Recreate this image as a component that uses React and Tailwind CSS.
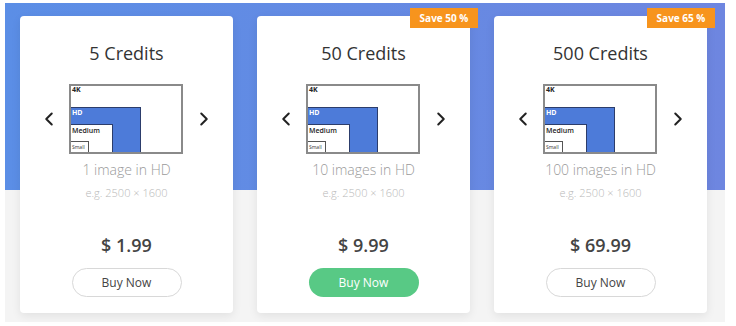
import { ChevronLeft, ChevronRight } from 'lucide-react'

const plans = [
  { credits: '5 Credits', images: '1 image in HD', price: '$ 1.99' },
  { credits: '50 Credits', images: '10 images in HD', price: '$ 9.99', save: 'Save 50 %', featured: true },
  { credits: '500 Credits', images: '100 images in HD', price: '$ 69.99', save: 'Save 65 %' },
]

function SizeDiagram() {
  return (
    <div className="relative h-[70px] w-[114px] border-2 border-[#8a8a8a] bg-white">
      <span className="absolute left-[1px] top-[0px] text-[7px] font-bold leading-[8px] text-[#222]">4K</span>
      <div className="absolute bottom-0 left-0 h-[45px] w-[70px] border-r border-t border-[#2c3d6b] bg-[#4d7bd9]">
        <span className="absolute left-[1px] top-[1px] text-[7px] font-bold leading-[8px] text-white">HD</span>
      </div>
      <div className="absolute bottom-0 left-0 h-[28px] w-[42px] border-r border-t border-[#2c3d6b] bg-white">
        <span className="absolute left-[1px] top-[2px] text-[7px] font-semibold leading-[8px] text-[#222]">Medium</span>
      </div>
      <div className="absolute bottom-0 left-0 flex h-[11px] w-[18px] items-center border-r border-t border-[#555] bg-white">
        <span className="pl-[1px] text-[5px] leading-[6px] text-[#333]">Small</span>
      </div>
    </div>
  )
}

function PlanCard({ plan }) {
  return (
    <div className="relative flex h-[297px] w-[213px] flex-col items-center rounded-[4px] bg-white pt-[25px] shadow-[0_3px_10px_rgba(0,0,0,0.08)]">
      {plan.save ? (
        <div className="absolute -right-2 -top-2 flex h-[20px] w-[68px] items-center justify-center bg-[#f7941d] text-[10px] font-bold text-white">
          {plan.save}
        </div>
      ) : null}
      <h3 className="text-[18px] leading-[24px] text-[#333]">{plan.credits}</h3>
      <div className="mt-[19px] flex w-full items-center gap-[9px] pl-[18px]">
        <ChevronLeft size={22} strokeWidth={2.2} className="text-[#222]" />
        <SizeDiagram />
        <ChevronRight size={22} strokeWidth={2.2} className="ml-[1px] text-[#222]" />
      </div>
      <p className="mt-[6px] text-[14px] font-light leading-[20px] text-[#9a9a9a]">{plan.images}</p>
      <p className="mt-[5px] text-[11px] font-light leading-[16px] text-[#b8b8b8]">e.g. 2500 × 1600</p>
      <p className="mt-[32px] text-[18px] font-semibold leading-[24px] text-[#444]">{plan.price}</p>
      <button
        className={
          plan.featured
            ? 'mt-[11px] h-[29px] w-[110px] rounded-full bg-[#58c985] text-[12px] font-medium text-white'
            : 'mt-[11px] h-[29px] w-[110px] rounded-full border border-[#d8d8d8] bg-white text-[12px] text-[#444]'
        }
      >
        Buy Now
      </button>
    </div>
  )
}

export default function App() {
  return (
    <div className="h-[326px] w-[736px] bg-white pl-[5px] pt-[3px]" style={{ fontFamily: '"Open Sans", "Noto Sans", sans-serif' }}>
      <div className="flex h-[319px] w-[720px] gap-[24px] pl-[15px] pt-[13px] bg-[linear-gradient(180deg,transparent_187px,#f4f4f4_187px),linear-gradient(90deg,#5b8ee6,#6e86e0)]">
        {plans.map((plan) => (
          <PlanCard key={plan.credits} plan={plan} />
        ))}
      </div>
    </div>
  )
}
